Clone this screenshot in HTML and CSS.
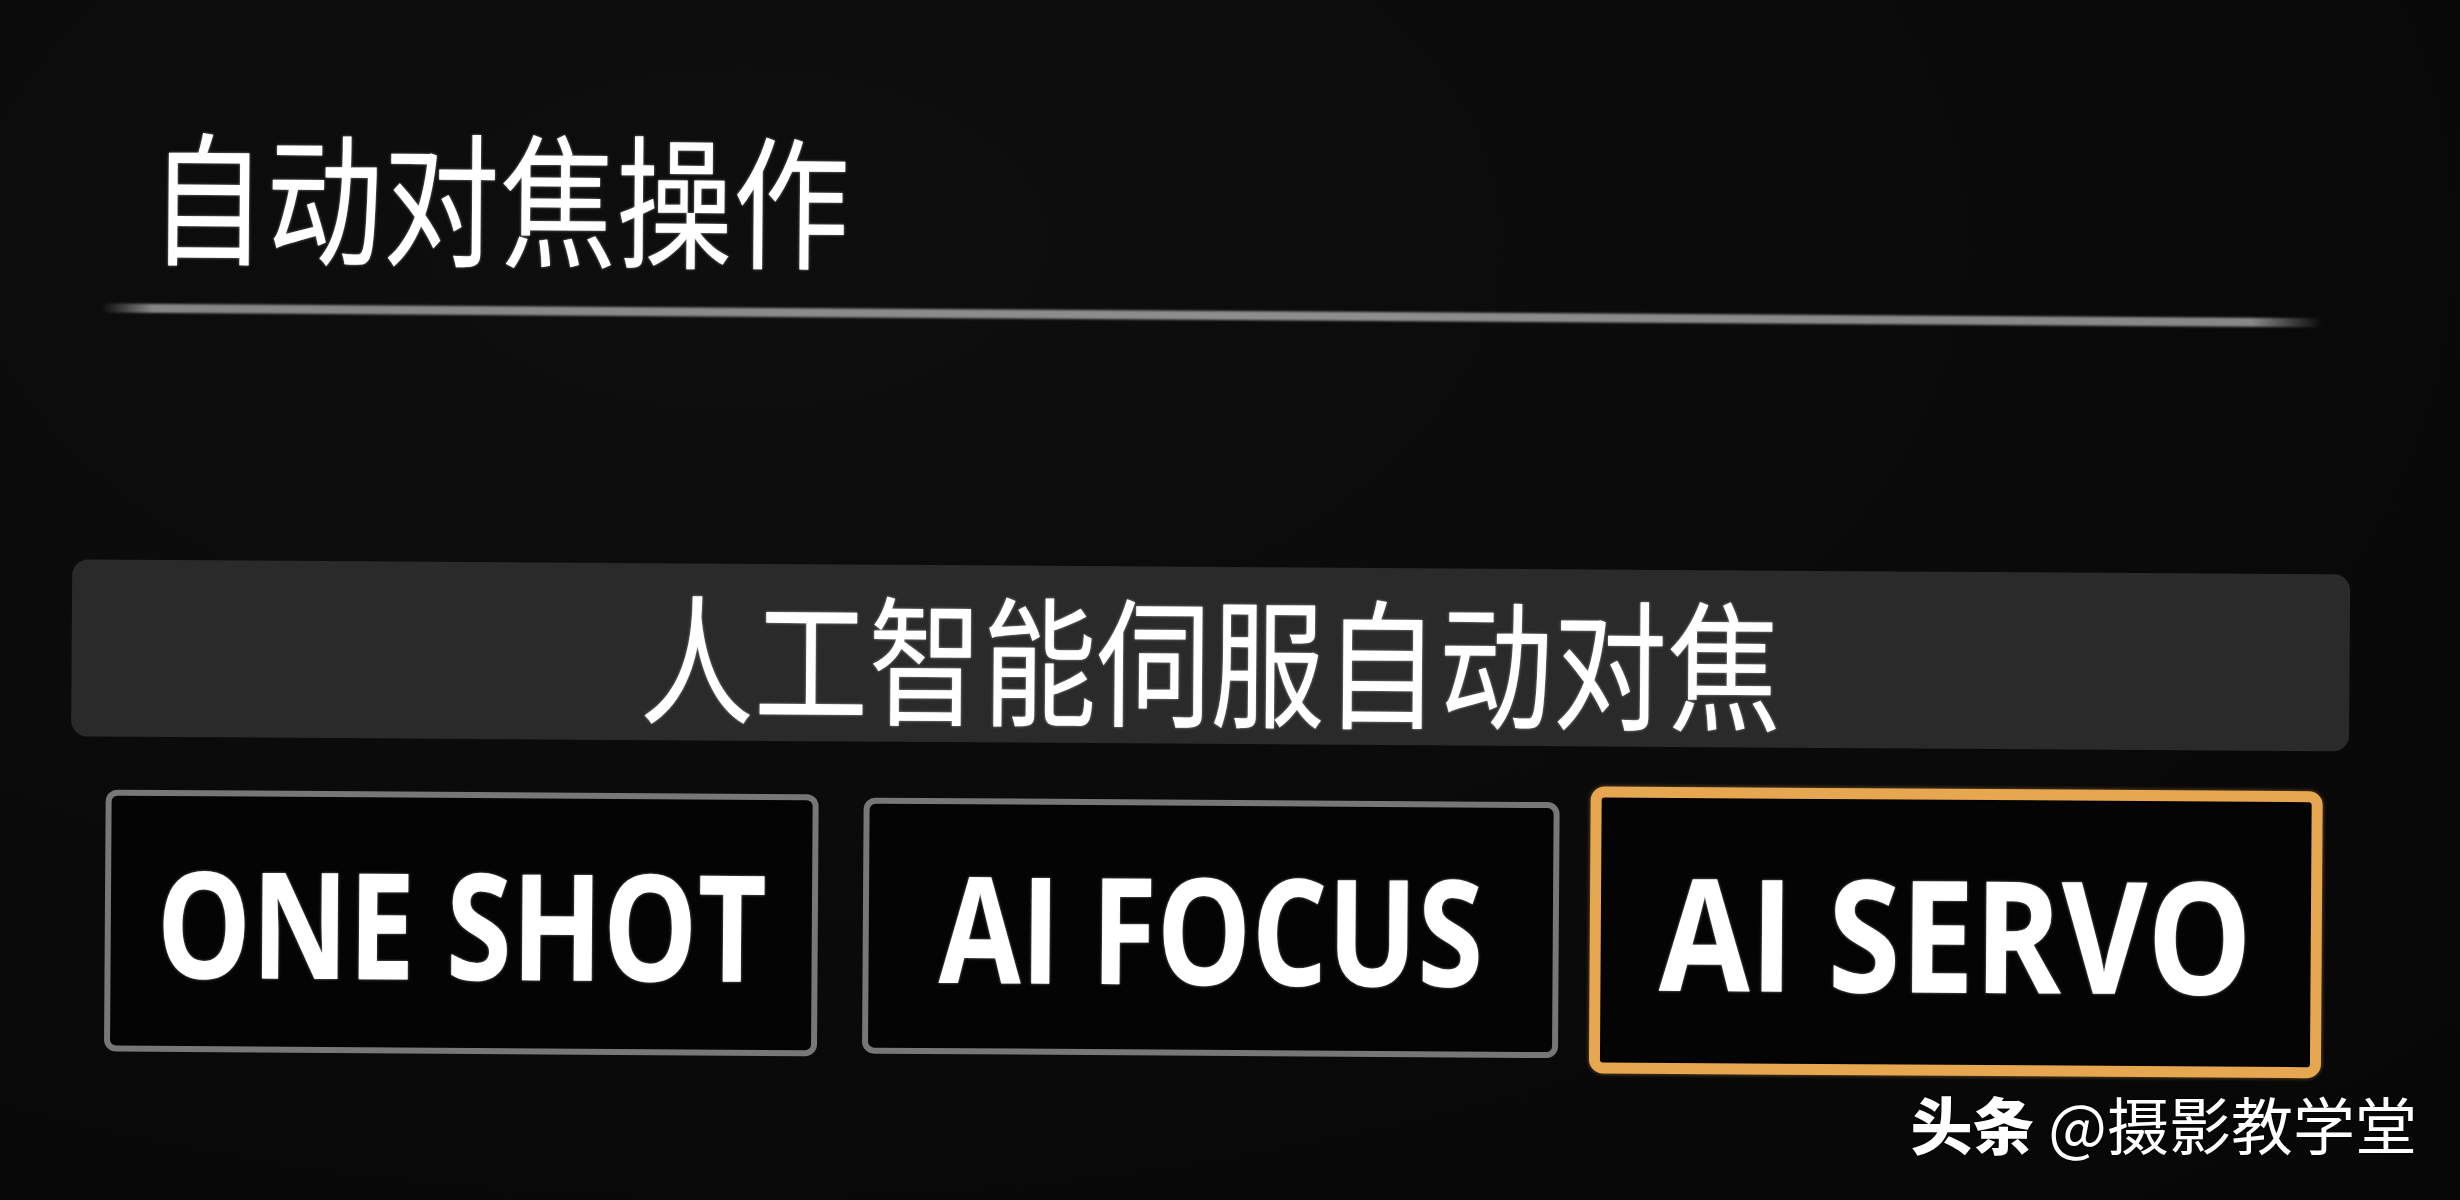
FILE: index.html
```html
<!DOCTYPE html>
<html lang="zh-CN">
<head>
<meta charset="utf-8">
<title>自动对焦操作</title>
<link rel="stylesheet" href="styles.css">
</head>
<body>
<div class="screen">
  <div class="panel">
    <h1 class="title"><span class="narrow">自动对焦操作</span></h1>
    <div class="rule"></div>
    <div class="current"><span class="narrow">人工智能伺服自动对焦</span></div>
    <div class="options">
      <div class="option option-one"><span class="label">ONE SHOT</span></div>
      <div class="option option-focus"><span class="label">AI FOCUS</span></div>
      <div class="option option-servo is-selected"><span class="label">AI SERVO</span></div>
    </div>
  </div>
  <div class="credit"><span class="credit-brand">头条</span> @摄影教学堂</div>
</div>
</body>
</html>
```
FILE: styles.css
```css
html, body {
  margin: 0;
  padding: 0;
  background: #0a0a0a;
}

.screen {
  position: relative;
  width: 2460px;
  height: 1200px;
  overflow: hidden;
  background: radial-gradient(ellipse at 30% 20%, #0e0e0e 0%, #0a0a0a 55%, #070707 100%);
  font-family: "Noto Sans CJK SC", "Noto Sans", sans-serif;
  color: #fff;
}

/* camera LCD is photographed at a slight tilt */
.panel {
  display: flex;
  flex-direction: column;
  transform: rotate(0.38deg);
  transform-origin: 1230px 600px;
}

.narrow {
  display: inline-block;
  transform: scaleX(0.81);
  transform-origin: left center;
  white-space: nowrap;
}

.title {
  margin: 0;
  padding: 126px 0 0 147px;
  font-size: 144px;
  line-height: 144px;
  font-weight: 400;
  letter-spacing: 0;
  text-shadow: 0 0 3px rgba(255, 255, 255, 0.55);
}

.rule {
  margin: 41px 0 0 100px;
  width: 2220px;
  height: 9px;
  border-radius: 5px;
  background: linear-gradient(to right,
    rgba(140, 140, 140, 0) 0,
    #868686 50px,
    #8e8e8e 50%,
    #888888 calc(100% - 70px),
    rgba(140, 140, 140, 0) 100%);
  filter: blur(1px);
}

.current {
  margin: 247px 0 0 72px;
  width: 2278px;
  height: 177px;
  border-radius: 16px;
  background: #2a2a2a;
  display: flex;
  align-items: center;
  justify-content: center;
  font-size: 140px;
  line-height: 140px;
  font-weight: 400;
  text-shadow: 0 0 3px rgba(255, 255, 255, 0.55);
}

.current .narrow {
  transform-origin: center center;
  transform: scaleX(0.815);
}

.options {
  margin: 40px 0 0 107px;
  display: flex;
  align-items: center;
  height: 287px;
}

.option {
  box-sizing: border-box;
  display: flex;
  align-items: center;
  justify-content: center;
  background: #040404;
  border: 6px solid #777777;
  border-radius: 12px;
  font-family: "Open Sans", "Noto Sans", sans-serif;
  font-weight: 700;
  font-size: 148px;
  line-height: 1;
}

.option-one {
  width: 713px;
  height: 262px;
  margin-right: 45px;
}

.option-focus {
  width: 696px;
  height: 256px;
  margin-right: 31px;
}

.option-servo {
  width: 732px;
  height: 287px;
  font-size: 156px;
}

.option.is-selected {
  border: 11px solid #e7a650;
  border-radius: 14px;
  box-shadow: 0 0 4px rgba(231, 166, 80, 0.5), inset 0 0 3px rgba(0, 0, 0, 0.8);
}

.label {
  display: inline-block;
  transform: scaleX(0.805);
  white-space: nowrap;
  text-shadow: 0 0 3px rgba(255, 255, 255, 0.5);
}

.option-servo .label {
  transform: scaleX(0.845);
}

.credit {
  position: absolute;
  right: 43px;
  top: 1092px;
  font-family: "Noto Sans CJK SC", "Noto Sans", sans-serif;
  font-size: 62px;
  line-height: 62px;
  font-weight: 400;
  color: #fff;
  white-space: nowrap;
  text-shadow: 0 0 2px rgba(0, 0, 0, 0.8);
}

.credit-brand {
  font-weight: 900;
}
```
